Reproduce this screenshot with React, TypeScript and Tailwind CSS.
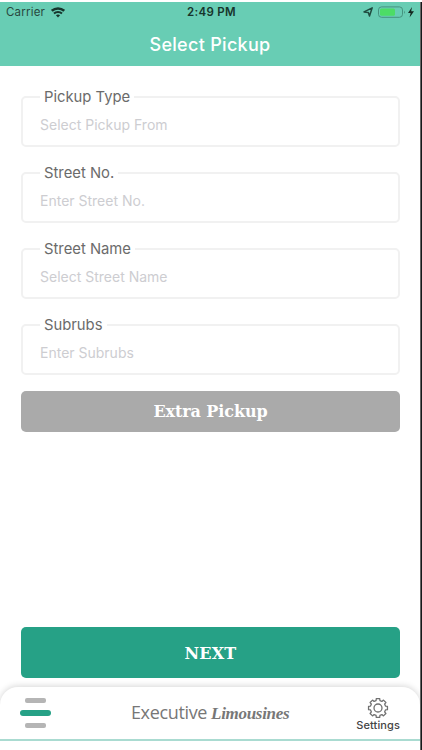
const fields = [
  { label: 'Pickup Type', placeholder: 'Select Pickup From' },
  { label: 'Street No.', placeholder: 'Enter Street No.' },
  { label: 'Street Name', placeholder: 'Select Street Name' },
  { label: 'Subrubs', placeholder: 'Enter Subrubs' },
];

function WifiIcon() {
  return (
    <svg width="14" height="11" viewBox="0 0 14 11" fill="none" stroke="#17352c">
      <path d="M.8 3.9a9.2 9.2 0 0 1 12.4 0" strokeWidth="2.6" />
      <path d="M3 6.5a5.8 5.8 0 0 1 8 0" strokeWidth="2" />
      <path d="M7 10.6 4.9 8.3a3.2 3.2 0 0 1 4.2 0z" fill="#17352c" stroke="none" />
    </svg>
  );
}

function StatusIcons() {
  return (
    <svg className="shrink-0" width="54" height="14" viewBox="0 0 54 14" fill="none">
      <path d="M1 6.9 9.2 2.8 6.5 11 5.3 7.4z" stroke="#204c40" strokeWidth="1.5" strokeLinejoin="round" />
      <rect x="15.5" y="1.9" width="24" height="10.4" rx="3" stroke="#45937f" strokeWidth="1" />
      <rect x="17" y="3.4" width="15" height="7.4" rx="1.5" fill="#4cdc66" />
      <path d="M41.1 5.4q1.6 1.7 0 3.5z" fill="#397f6d" />
      <path d="M49 2 45 8h2.6l-1 4.4 4.4-6.2h-2.8z" fill="#14271f" />
    </svg>
  );
}

function gearPath() {
  const points: string[] = [];
  const n = 8;
  for (let i = 0; i < n; i++) {
    const a = (i * 2 * Math.PI) / n - Math.PI / 2;
    const at = (r: number, d: number) =>
      `${(11 + r * Math.cos(a + d)).toFixed(2)} ${(11 + r * Math.sin(a + d)).toFixed(2)}`;
    points.push(at(7.7, -0.25), at(9.6, -0.18), at(9.6, 0.18), at(7.7, 0.25));
  }
  return `M${points.join('L')}Z`;
}

function GearIcon() {
  return (
    <svg width="22" height="22" viewBox="0 0 22 22" fill="none" stroke="#707070" strokeWidth="1.3" strokeLinejoin="round">
      <path d={gearPath()} />
      <circle cx="11" cy="11" r="4" />
    </svg>
  );
}

export default function App() {
  return (
    <div className="flex h-[750px] w-[422px] overflow-hidden bg-white pt-[2px] font-['Inter','Liberation_Sans',sans-serif]">
      <main className="flex w-[420px] flex-col">
        <header className="h-[64px] bg-[#68cdb4]">
          <div className="grid h-[20px] grid-cols-3 items-center pr-[3px] pl-[6px]">
            <div className="flex items-center gap-[6px] pt-px text-[11.5px] tracking-[0.2px] text-[#29493f]">
              <span>Carrier</span>
              <WifiIcon />
            </div>
            <span className="pt-px text-center text-[11.5px] font-semibold tracking-[0.3px] text-[#17352c]">2:49 PM</span>
            <div className="flex justify-end"><StatusIcons /></div>
          </div>
          <h1 className="flex h-[44px] items-center justify-center text-[18px] font-medium tracking-[0.3px] text-white">Select Pickup</h1>
        </header>

        <section className="flex flex-col pt-[21px] pr-[20px] pl-[21px]">
          {fields.map((f) => (
            <fieldset key={f.label} className="mb-[16px] h-[60px] rounded-[5px] border-2 border-[#f1f1f1] pl-[17px]">
              <legend className="h-[20px] px-[4px] text-[14.8px] leading-[21px] text-[#6b6b6b]">{f.label}</legend>
              <div className="pt-[9px] text-[14px] leading-[18px] text-[#cdcdd1]">{f.placeholder}</div>
            </fieldset>
          ))}
          <button className="h-[41px] rounded-[5px] bg-[#aaaaaa] pt-px font-['DejaVu_Serif','Liberation_Serif',serif] text-[16px] font-bold tracking-[-0.1px] text-white">
            Extra Pickup
          </button>
        </section>

        <div className="mt-auto pr-[20px] pl-[21px]">
          <button className="h-[51px] w-full rounded-[5px] bg-[#26a186] pt-[2px] font-['DejaVu_Serif','Liberation_Serif',serif] text-[16px] font-bold tracking-[0.2px] text-white">
            NEXT
          </button>
        </div>

        <footer className="mt-[9px] flex h-[54px] shrink-0 items-center justify-between rounded-t-[18px] border-b-2 border-[#aadbd1] bg-white pr-[20px] pl-[20px] shadow-[0_-1px_6px_rgba(0,0,0,0.16)]">
          <div className="flex w-[31px] flex-col items-center gap-[7px]">
            <span className="h-[5px] w-[21px] rounded-[2px] bg-[#b5b5b5]" />
            <span className="h-[6px] w-[31px] rounded-[3px] bg-[#26a186]" />
            <span className="h-[5px] w-[21px] rounded-[2px] bg-[#b5b5b5]" />
          </div>
          <div className="ml-[13px] flex items-baseline gap-[4px] text-[#777]">
            <span className="font-['Open_Sans','Noto_Sans',sans-serif] text-[18px] tracking-[-0.35px]">Executive</span>
            <span className="font-['Liberation_Serif',serif] text-[17px] font-bold tracking-[-0.3px] italic">Limousines</span>
          </div>
          <div className="flex flex-col items-center pt-[2px]">
            <GearIcon />
            <span className="text-[11px] leading-[12px] font-medium tracking-[0.1px] text-[#444]">Settings</span>
          </div>
        </footer>
        <div className="h-[9px] shrink-0 bg-white" />
      </main>
      <div className="w-[2px] border-l border-[#666] bg-[#16191c]" />
    </div>
  );
}
